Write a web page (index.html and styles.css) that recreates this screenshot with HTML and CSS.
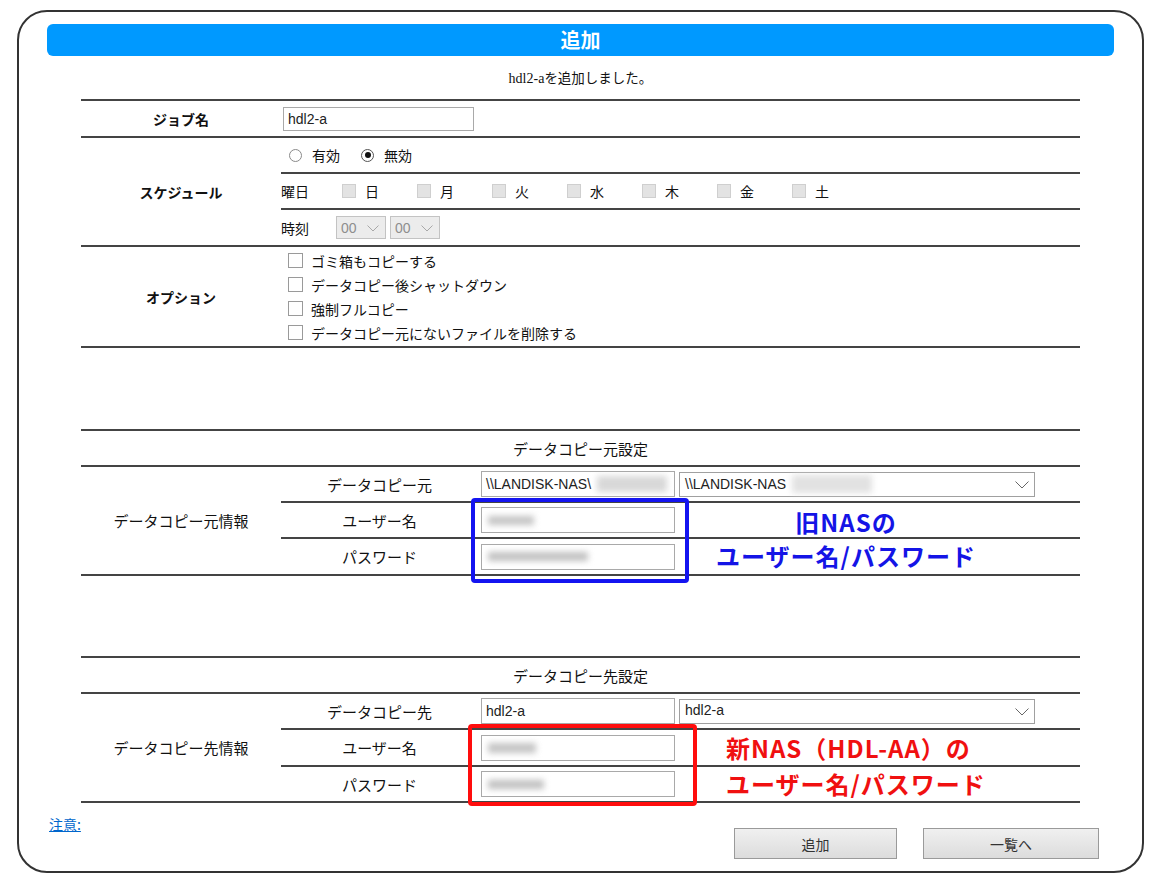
FILE: index.html
```html
<!DOCTYPE html>
<html lang="ja">
<head>
<meta charset="utf-8">
<title>追加</title>
<link rel="stylesheet" href="styles.css">
</head>
<body>
<div class="frame">
  <div class="titlebar">追加</div>
  <p class="msg"><span class="serif">hdl2-a</span>を追加しました。</p>

  <div class="tbl">
    <div class="row h-job">
      <div class="lbl b">ジョブ名</div>
      <div class="val cell pl2"><div class="input job">hdl2-a</div></div>
    </div>
    <div class="row">
      <div class="lbl b">スケジュール</div>
      <div class="val">
        <div class="sub h34 cell radios">
          <span class="radio"></span><span class="rtxt">有効</span>
          <span class="radio on"></span><span class="rtxt">無効</span>
        </div>
        <div class="sub h34 cell days">
          <span class="dlbl">曜日</span>
          <span class="day"><span class="cb dis"></span>日</span>
          <span class="day"><span class="cb dis"></span>月</span>
          <span class="day"><span class="cb dis"></span>火</span>
          <span class="day"><span class="cb dis"></span>水</span>
          <span class="day"><span class="cb dis"></span>木</span>
          <span class="day"><span class="cb dis"></span>金</span>
          <span class="day"><span class="cb dis"></span>土</span>
        </div>
        <div class="sub last h35 cell times">
          <span class="tlbl">時刻</span>
          <span class="tsel">00<svg class="chev" width="12" height="7" viewBox="0 0 12 7"><polyline points="0.5,0.5 6,6 11.5,0.5" fill="none" stroke="#a8a8a8" stroke-width="1"/></svg></span>
          <span class="tsel">00<svg class="chev" width="12" height="7" viewBox="0 0 12 7"><polyline points="0.5,0.5 6,6 11.5,0.5" fill="none" stroke="#a8a8a8" stroke-width="1"/></svg></span>
        </div>
      </div>
    </div>
    <div class="row h-opt">
      <div class="lbl b">オプション</div>
      <div class="val opts">
        <div class="opt"><span class="cb"></span>ゴミ箱もコピーする</div>
        <div class="opt"><span class="cb"></span>データコピー後シャットダウン</div>
        <div class="opt"><span class="cb"></span>強制フルコピー</div>
        <div class="opt"><span class="cb"></span>データコピー元にないファイルを削除する</div>
      </div>
    </div>
  </div>

  <div class="tbl sect s2">
    <div class="shead">データコピー元設定</div>
    <div class="row">
      <div class="lbl">データコピー元情報</div>
      <div class="val">
        <div class="sub h34 cell">
          <div class="sublbl">データコピー元</div>
          <div class="input dat">\\LANDISK-NAS\<span class="blur b1"></span></div>
          <div class="sel">\\LANDISK-NAS<span class="blur b2"></span><svg class="chev big" width="14" height="8" viewBox="0 0 14 8"><polyline points="0.5,0.5 7,7 13.5,0.5" fill="none" stroke="#666" stroke-width="1"/></svg></div>
        </div>
        <div class="sub h34 cell">
          <div class="sublbl">ユーザー名</div>
          <div class="input dat"><span class="blur b3"></span></div>
        </div>
        <div class="sub last h35 cell">
          <div class="sublbl">パスワード</div>
          <div class="input dat"><span class="blur b4"></span></div>
        </div>
      </div>
    </div>
  </div>

  <div class="tbl sect s3">
    <div class="shead">データコピー先設定</div>
    <div class="row">
      <div class="lbl">データコピー先情報</div>
      <div class="val">
        <div class="sub h34 cell">
          <div class="sublbl">データコピー先</div>
          <div class="input dat">hdl2-a</div>
          <div class="sel top">hdl2-a<svg class="chev big" width="14" height="8" viewBox="0 0 14 8"><polyline points="0.5,0.5 7,7 13.5,0.5" fill="none" stroke="#666" stroke-width="1"/></svg></div>
        </div>
        <div class="sub h35 cell">
          <div class="sublbl">ユーザー名</div>
          <div class="input dat"><span class="blur b5"></span></div>
        </div>
        <div class="sub last h34 cell">
          <div class="sublbl">パスワード</div>
          <div class="input dat"><span class="blur b6"></span></div>
        </div>
      </div>
    </div>
  </div>

  <div class="foot">
    <a class="note" href="#">注意:</a>
    <div class="btns">
      <span class="btn add">追加</span>
      <span class="btn list">一覧へ</span>
    </div>
  </div>

  <div class="mark blue-box"></div>
  <div class="note-txt blue-txt">旧NASの<br>ユーザー名/パスワード</div>
  <div class="mark red-box"></div>
  <div class="note-txt red-txt">新NAS（HDL-AA）の<br>ユーザー名/パスワード</div>
</div>
</body>
</html>
```

FILE: styles.css
```css
* { box-sizing: border-box; }
html, body { margin: 0; padding: 0; background: #fff; }
body {
  font-family: "Noto Sans CJK JP", "Liberation Sans", sans-serif;
  font-size: 14px;
  color: #111;
}
.frame {
  position: relative;
  margin: 10px 0 0 17px;
  width: 1127px;
  height: 863px;
  border: 2px solid #333;
  border-radius: 30px;
  padding: 12px 28px 0;
}
.titlebar {
  height: 32px;
  background: #0099ff;
  border-radius: 6px;
  color: #fff;
  font-weight: bold;
  font-size: 20px;
  line-height: 32px;
  text-align: center;
}
.msg {
  margin: 10px 0 0;
  height: 22px;
  overflow: hidden;
  text-align: center;
  font-size: 13.5px;
  line-height: 22px;
}
.msg .serif { font-family: "Liberation Serif", serif; font-size: 14px; }

.tbl { margin: 11px 34px 0; border-top: 2px solid #444; }
.tbl.s2 { margin-top: 81px; }
.tbl.s3 { margin-top: 80px; }
.row { display: flex; border-bottom: 2px solid #444; }
.lbl {
  width: 200px;
  flex: none;
  display: flex;
  align-items: center;
  justify-content: center;
}
.b { font-weight: bold; }
.val { flex: 1; }
.cell { display: flex; align-items: center; }
.pl2 { padding-left: 2px; }
.h-job { height: 37px; }
.h-job .val { height: 35px; }
.sub { border-bottom: 2px solid #444; }
.sub.last { border-bottom: none; }
.h34 { height: 36px; }
.h35 { height: 37px; }
.sub.last.h35 { height: 35px; }
.sub.last.h34 { height: 34px; }

.input {
  border: 1px solid #a9a9a9;
  font-family: "Liberation Sans", Arial, sans-serif;
  font-size: 14px;
  color: #222;
  padding-left: 4px;
  display: flex;
  align-items: center;
  overflow: hidden;
  white-space: nowrap;
}
.input.job { width: 191px; height: 24px; }
.input.dat { width: 194px; height: 26px; margin-left: 3px; }

/* radios */
.radios { padding-left: 8px; }
.radio {
  width: 13px; height: 13px;
  border: 1px solid #8a8a8a;
  border-radius: 50%;
  background: #fff;
  position: relative;
  flex: none;
}
.radio.on { border-color: #555; }
.radio.on::after {
  content: "";
  position: absolute;
  left: 2.5px; top: 2.5px;
  width: 6px; height: 6px;
  border-radius: 50%;
  background: #111;
}
.rtxt { margin-left: 10px; margin-right: 21px; }

/* days */
.dlbl { width: 61px; flex: none; }
.day { width: 75px; flex: none; display: flex; align-items: center; }
.cb {
  width: 15px; height: 15px;
  border: 1px solid #9a9a9a;
  background: #fff;
  flex: none;
  display: inline-block;
}
.cb.dis { width: 14px; height: 14px; background: #e3e3e3; border-color: #cfcfcf; margin-right: 9px; }

/* times */
.tlbl { width: 55px; flex: none; }
.tsel {
  width: 50px; height: 23px;
  border: 1px solid #c3c3c3;
  background: #ececec;
  color: #8e8e8e;
  font-family: "Liberation Sans", Arial, sans-serif;
  font-size: 14px;
  display: flex;
  align-items: center;
  padding-left: 4px;
  margin-right: 4px;
  position: relative;
}
.tsel .chev { position: absolute; right: 6px; top: 8px; }

/* options */
.h-opt { height: 101px; }
.opts { display: flex; flex-direction: column; justify-content: center; padding-left: 7px; }
.opt { height: 24px; display: flex; align-items: center; }
.opt .cb { margin-right: 8px; }

/* sections */
.shead {
  height: 36px;
  border-bottom: 2px solid #444;
  display: flex;
  align-items: center;
  justify-content: center;
  font-size: 15px;
}
.s2 .lbl, .s3 .lbl { font-size: 15px; }
.sublbl { width: 197px; flex: none; text-align: center; font-size: 15px; }
.sel {
  width: 356px; height: 25px;
  margin-left: 4px;
  border: 1px solid #a0a0a0;
  font-family: "Liberation Sans", Arial, sans-serif;
  font-size: 14px;
  color: #222;
  display: flex;
  align-items: center;
  padding-left: 5px;
  position: relative;
}
.sel.top { align-items: flex-start; padding-top: 2px; }
.sel .chev { position: absolute; right: 5px; top: 8px; }

.blur {
  display: inline-block;
  height: 12px;
  background: #cfcfcf;
  filter: blur(3px);
  flex: none;
}
.b1 { width: 70px; margin-left: 6px; background: #d8d8d8; height: 16px; }
.b2 { width: 80px; margin-left: 6px; background: #e2e2e2; height: 18px; }
.b3 { width: 46px; margin-left: 2px; background: #c4c4c4; height: 9px; }
.b4 { width: 100px; margin-left: 2px; background: #c0c0c0; height: 9px; }
.b5 { width: 48px; margin-left: 2px; background: #c4c4c4; height: 10px; }
.b6 { width: 56px; margin-left: 2px; background: #c0c0c0; height: 9px; }

/* footer */
.foot { display: flex; align-items: flex-start; }
.note {
  margin: 12px 0 0 2px;
  color: #0066cc;
  text-decoration: underline;
  line-height: 18px;
}
.btns { margin: 25px 15px 0 auto; display: flex; gap: 26px; }
.btn {
  height: 31px;
  border: 1px solid #9a9a9a;
  background: linear-gradient(#f0f0f0, #dcdcdc);
  color: #333;
  display: flex;
  align-items: center;
  justify-content: center;
  font-size: 14px;
}
.btn.add { width: 163px; }
.btn.list { width: 176px; }

/* annotations */
.mark { position: absolute; border-radius: 4px; }
.blue-box { left: 452px; top: 486px; width: 218px; height: 85px; border: 4px solid #1414f0; }
.red-box { left: 449px; top: 712px; width: 229px; height: 82px; border: 4px solid #ff0d0d; }
.note-txt {
  position: absolute;
  font-weight: bold;
  font-size: 24px;
  letter-spacing: 1px;
  white-space: nowrap;
}
.blue-txt { left: 677px; top: 493px; width: 300px; text-align: center; line-height: 34px; color: #1414e6; }
.red-txt { left: 707px; top: 718px; line-height: 36px; color: #f01010; }
```
